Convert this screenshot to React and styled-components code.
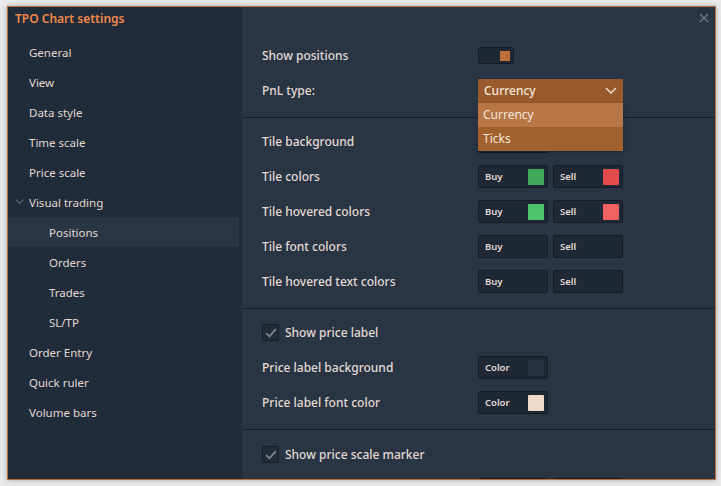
import React from "react";
import styled, { createGlobalStyle } from "styled-components";

const GlobalStyle = createGlobalStyle`
  html, body {
    margin: 0;
    padding: 0;
    background: #e9e9e9;
  }
  body {
    font-family: "Noto Sans", "Open Sans", sans-serif;
  }
`;

const menu = [
  { label: "General" },
  { label: "View" },
  { label: "Data style" },
  { label: "Time scale" },
  { label: "Price scale" },
  { label: "Visual trading", open: true },
  { label: "Positions", sub: true, active: true },
  { label: "Orders", sub: true },
  { label: "Trades", sub: true },
  { label: "SL/TP", sub: true },
  { label: "Order Entry" },
  { label: "Quick ruler" },
  { label: "Volume bars" },
];

const tileRows = [
  { label: "Tile colors", buy: "#41a85a", sell: "#e24c4c" },
  { label: "Tile hovered colors", buy: "#4dc56c", sell: "#f16262" },
  { label: "Tile font colors" },
  { label: "Tile hovered text colors" },
];

const Chevron = ({ color = "#7d8792", size = 10, width = 1.2 }) => (
  <svg width={size} height={size * 0.6} viewBox="0 0 10 6" fill="none">
    <path d="M0.8 0.8 L5 5 L9.2 0.8" stroke={color} strokeWidth={width} />
  </svg>
);

const Check = () => (
  <svg width="12" height="10" viewBox="0 0 12 10">
    <path d="M1.2 5.2 L4.4 8.4 L10.8 1.2" stroke="#7b838c" strokeWidth="1.8" fill="none" />
  </svg>
);

const ColorField = ({ text, swatch }) => (
  <ColorBox>
    <span>{text}</span>
    {swatch && <Swatch $color={swatch} />}
  </ColorBox>
);

const App = () => {
  return (
    <Page>
      <GlobalStyle />
      <Window>
        <Sidebar>
          <Title>TPO Chart settings</Title>
          <Menu>
            {menu.map((item) => (
              <MenuItem key={item.label} $sub={item.sub} $active={item.active} $icon={item.open}>
                {item.open && (
                  <IconSlot>
                    <Chevron color="#5f6a77" size={9} />
                  </IconSlot>
                )}
                {item.label}
              </MenuItem>
            ))}
          </Menu>
        </Sidebar>

        <Main>
          <Close>
            <svg width="10" height="10" viewBox="0 0 10 10">
              <path d="M1 1 L9 9 M9 1 L1 9" stroke="#707a87" strokeWidth="1.2" />
            </svg>
          </Close>

          <Section $top={31}>
            <Row>
              <Label>Show positions</Label>
              <Toggle>
                <Knob />
              </Toggle>
            </Row>
            <Row>
              <Label>PnL type:</Label>
              <SelectWrap>
                <Select>
                  <span>Currency</span>
                  <Chevron color="#f3e3d6" size={12} width={1.1} />
                </Select>
                <Dropdown>
                  <Option $hover>Currency</Option>
                  <Option>Ticks</Option>
                </Dropdown>
              </SelectWrap>
            </Row>
          </Section>

          <Section>
            <Row>
              <Label>Tile background</Label>
              {/* covered by the open dropdown */}
              <ColorField />
            </Row>
            {tileRows.map((r) => (
              <Row key={r.label}>
                <Label>{r.label}</Label>
                <Controls>
                  <ColorField text="Buy" swatch={r.buy} />
                  <ColorField text="Sell" swatch={r.sell} />
                </Controls>
              </Row>
            ))}
          </Section>

          <Section>
            <Row>
              <CheckLabel>
                <CheckBox>
                  <Check />
                </CheckBox>
                Show price label
              </CheckLabel>
            </Row>
            <Row>
              <Label>Price label background</Label>
              <ColorField text="Color" swatch="#243141" />
            </Row>
            <Row>
              <Label>Price label font color</Label>
              <ColorField text="Color" swatch="#f0d9ca" />
            </Row>
          </Section>

          <Section $top={7}>
            <Row>
              <CheckLabel>
                <CheckBox>
                  <Check />
                </CheckBox>
                Show price scale marker
              </CheckLabel>
            </Row>
            {/* next row is clipped by the window, only the box tops show */}
            <Row>
              <Label />
              <Controls>
                <ColorField />
                <ColorField />
              </Controls>
            </Row>
          </Section>
        </Main>
      </Window>
    </Page>
  );
};

const Page = styled.div`
  width: 721px;
  height: 486px;
  padding: 6px 6px 6px 7px;
  box-sizing: border-box;
`;

const Window = styled.div`
  display: flex;
  width: 709px;
  height: 474px;
  box-sizing: border-box;
  border: 1px solid #b66c3b;
  box-shadow: 0 0 5px rgba(0, 0, 0, 0.28);
  overflow: hidden;
`;

const Sidebar = styled.div`
  display: flex;
  flex-direction: column;
  width: 234px;
  flex-shrink: 0;
  background: #212c3a;
`;

const Title = styled.div`
  height: 30px;
  box-sizing: border-box;
  padding: 3px 0 0 7px;
  line-height: 17px;
  font-size: 12px;
  font-weight: 600;
  color: #f0884b;
`;

const Menu = styled.div`
  display: flex;
  flex-direction: column;
`;

const MenuItem = styled.div`
  display: flex;
  align-items: center;
  height: 30px;
  margin-right: 3px;
  padding-left: ${(p) => (p.$sub ? 41 : p.$icon ? 7 : 21)}px;
  font-size: 11.5px;
  color: #e2d8d1;
  background: ${(p) => (p.$active ? "#2a3543" : "transparent")};
`;

const IconSlot = styled.span`
  display: flex;
  align-items: center;
  width: 14px;
`;

const Main = styled.div`
  position: relative;
  flex: 1;
  background: #2a3544;
  overflow: hidden;
`;

const Close = styled.div`
  position: absolute;
  top: 6px;
  right: 6px;
  width: 10px;
  height: 10px;
  display: flex;
`;

const Section = styled.div`
  padding: ${(p) => p.$top ?? 6}px 0 ${(p) => p.$bottom ?? 9}px;
  border-bottom: 1px solid #161d27;
`;

const Row = styled.div`
  display: flex;
  align-items: center;
  height: 35px;
  padding-left: 20px;
`;

const Label = styled.div`
  width: 216px;
  flex-shrink: 0;
  font-size: 12px;
  font-weight: 500;
  color: #e4dad3;
`;

const Controls = styled.div`
  display: flex;
  gap: 5px;
`;

const ColorBox = styled.div`
  display: flex;
  align-items: center;
  justify-content: space-between;
  width: 70px;
  height: 23px;
  box-sizing: border-box;
  padding: 0 3px 0 6px;
  background: #1f2936;
  border: 1px solid #151c25;
  border-radius: 2px;
  font-size: 9.5px;
  font-weight: 600;
  color: #e4dad3;
`;

const Swatch = styled.span`
  width: 16px;
  height: 16px;
  border-radius: 1px;
  background: ${(p) => p.$color};
`;

const Toggle = styled.div`
  display: flex;
  align-items: center;
  justify-content: flex-end;
  width: 36px;
  height: 17px;
  box-sizing: border-box;
  padding-right: 3px;
  background: #1f2936;
  border: 1px solid #141b24;
  border-radius: 2px;
`;

const Knob = styled.span`
  width: 10px;
  height: 10px;
  background: #c06f3b;
`;

const SelectWrap = styled.div`
  position: relative;
  width: 145px;
`;

const Select = styled.div`
  display: flex;
  align-items: center;
  justify-content: space-between;
  height: 24px;
  padding: 0 6px;
  background: #98592d;
  border-radius: 1px;
  font-size: 12px;
  font-weight: 500;
  color: #f5e6da;
`;

const Dropdown = styled.div`
  position: absolute;
  top: 24px;
  left: 0;
  right: 0;
  z-index: 2;
  display: flex;
  flex-direction: column;
  box-shadow: 0 2px 4px rgba(0, 0, 0, 0.25);
`;

const Option = styled.div`
  display: flex;
  align-items: center;
  height: 24px;
  padding: 0 5px;
  font-size: 12px;
  color: #f5e6da;
  background: ${(p) => (p.$hover ? "#b87647" : "#a1612f")};
`;

const CheckLabel = styled.label`
  display: flex;
  align-items: center;
  gap: 6px;
  font-size: 12px;
  font-weight: 500;
  color: #e4dad3;
`;

const CheckBox = styled.span`
  display: flex;
  align-items: center;
  justify-content: center;
  width: 17px;
  height: 17px;
  box-sizing: border-box;
  background: #222c39;
  border: 1px solid #151c25;
  border-radius: 2px;
`;

export default App;
